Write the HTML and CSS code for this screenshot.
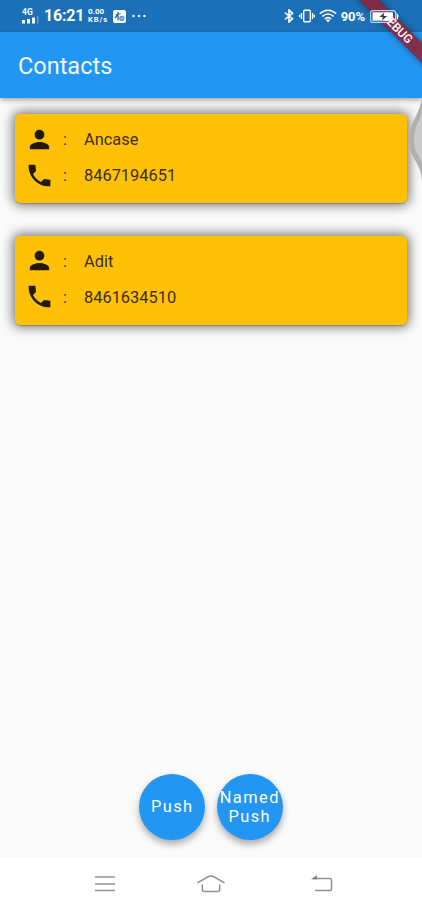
FILE: index.html
```html
<!DOCTYPE html>
<html lang="en">
<head>
<meta charset="utf-8">
<title>Contacts</title>
<link rel="stylesheet" href="styles.css">
</head>
<body>
<div class="screen">
  <header class="statusbar">
    <div class="network">
      <span class="gen">4G</span>
      <svg width="17" height="8" viewBox="0 0 17 8"><path fill="#fff" d="M0 4h3v3.500H0zM5 3h3v4.500H5zM10 1.500h3v6h-3z"/><path fill="#fff" opacity=".3" d="M15 0h1.500v7.500H15z"/></svg>
    </div>
    <span class="clock">16:21</span>
    <div class="speed"><span class="rate">0.00</span><span class="unit">KB/s</span></div>
    <svg class="app" width="13" height="13" viewBox="0 0 13 13"><rect width="13" height="13" rx="2" fill="#fff"/><path d="M5 2v8.500M2.500 5l5-1.500M2 8l3-3.500" stroke="#1b70b7" stroke-width="1.300" fill="none"/><circle cx="8.800" cy="8.500" r="2" fill="#8dbde5" stroke="#559bd5" stroke-width="1.300"/></svg>
    <svg class="dots" width="14" height="4" viewBox="0 0 14 4" fill="#fff"><circle cx="1.500" cy="2" r="1.200"/><circle cx="7" cy="2" r="1.200"/><circle cx="12.400" cy="2" r="1.200"/></svg>
    <div class="right">
      <svg class="bt" width="10" height="14" viewBox="0 0 10 14"><path d="M1 3.700l7.500 6L5 13V1l3.500 3.300L1 10.300" fill="none" stroke="#fff" stroke-width="1.600"/></svg>
      <svg class="vib" width="16" height="14" viewBox="0 0 16 14" fill="none" stroke="#fff" stroke-width="1.400"><rect x="4.700" y="1.200" width="6.600" height="11.600" rx="1"/><path d="M2.500 4v6M13.500 4v6M.7 5.700v2.600M15.300 5.700v2.600"/></svg>
      <svg class="wifi" width="18" height="14" viewBox="0 0 18 14" fill="none" stroke="#fff" stroke-width="1.500"><path d="M.8 4.800Q9-2.300 17.200 4.800M3.300 7.500Q9 2.500 14.700 7.500M5.700 10Q9 7.200 12.300 10"/><path d="M6.800 11Q9 9.400 11.200 11L9 13.500z" fill="#fff" stroke="none"/></svg>
      <span class="pct">90%</span>
      <svg width="29" height="13" viewBox="0 0 29 13"><rect x=".6" y=".6" width="25" height="11.800" rx="2.200" fill="none" stroke="#bcd8ef" stroke-width="1.100"/><path d="M2.500 2.300h20.500v8.400H2.500z" fill="#fff"/><path d="M26.700 2.500q3.400 4 0 8z" fill="#fff"/><path d="M14 2.700L9.500 7h3.300l-.8 3.600L17.200 6h-3.500z" fill="#2b3a46"/></svg>
    </div>
  </header>
  <div class="appbar"><h1>Contacts</h1></div>
  <main class="list">
    <section class="card">
      <div class="row"><svg class="icon" viewBox="0 0 24 24"><path d="M12 12c2.210 0 4-1.790 4-4s-1.790-4-4-4-4 1.790-4 4 1.790 4 4 4zm0 2c-2.670 0-8 1.340-8 4v2h16v-2c0-2.660-5.330-4-8-4z"/></svg><span class="colon">:</span><span>Ancase</span></div>
      <div class="row"><svg class="icon" viewBox="0 0 24 24"><path d="M21 15.460l-5.270-.61-2.520 2.520c-2.830-1.440-5.150-3.750-6.590-6.590l2.530-2.530L8.540 3H3.030C2.450 13.180 10.820 21.550 21 20.970v-5.510z"/></svg><span class="colon">:</span><span>8467194651</span></div>
    </section>
    <section class="card">
      <div class="row"><svg class="icon" viewBox="0 0 24 24"><path d="M12 12c2.210 0 4-1.790 4-4s-1.790-4-4-4-4 1.790-4 4 1.790 4 4 4zm0 2c-2.670 0-8 1.340-8 4v2h16v-2c0-2.660-5.330-4-8-4z"/></svg><span class="colon">:</span><span>Adit</span></div>
      <div class="row"><svg class="icon" viewBox="0 0 24 24"><path d="M21 15.460l-5.270-.61-2.520 2.520c-2.830-1.440-5.150-3.750-6.590-6.590l2.530-2.530L8.540 3H3.030C2.450 13.180 10.820 21.550 21 20.970v-5.510z"/></svg><span class="colon">:</span><span>8461634510</span></div>
    </section>
  </main>
  <div class="actions">
    <button class="fab">Push</button>
    <button class="fab"><span>Named</span><span>Push</span></button>
  </div>
  <nav class="navbar">
    <svg width="22" height="18" viewBox="0 0 22 18"><path d="M1 2h20M1 9h20M1 15.500h20" stroke="#949494" stroke-width="1.300"/></svg>
    <svg class="home" width="30" height="20" viewBox="0 0 30 20" fill="none" stroke="#909090" stroke-width="1.500"><path d="M1.500 8.800L12.500 2.500Q15 1.300 17.500 2.500L28.500 8.800M6.300 10.500V15.500q0 2 2 2h13.400q2 0 2-2v-5"/></svg>
    <svg width="22" height="18" viewBox="0 0 22 18"><path d="M2 3.500h17q1.500 0 1.500 1.500v9q0 1.500-1.500 1.500H4" fill="none" stroke="#909090" stroke-width="1.500"/><path d="M0 4.200L6 .3v3.900z" fill="#808080"/></svg>
  </nav>
  <svg class="edge" width="14" height="92" viewBox="0 0 14 92"><path d="M14 0C13 21 1 27 1 46S13 67 14 88z" fill="#b0b0b0"/><path d="M14 18C12 27 6 32 6 46S12 61 14 70z" fill="#cacaca"/></svg>
  <div class="corner"><div class="debug">DEBUG</div></div>
</div>
</body>
</html>
```
FILE: styles.css
```css
* { box-sizing: border-box; }
body { margin: 0; font-family: Roboto, "Liberation Sans", sans-serif; }
svg { display: block; flex: none; }
.screen { position: relative; width: 422px; height: 907px; overflow: hidden; background: #fafafa; display: flex; flex-direction: column; }
.statusbar { height: 32px; flex: none; background: #1b70b7; color: #fff; display: flex; align-items: center; padding: 0 23px 0 22px; }
.network { width: 22px; display: flex; flex-direction: column; }
.gen { font-size: 8.500px; line-height: 7px; font-weight: 700; }
.clock { width: 44px; font-size: 16px; font-weight: 700; line-height: 32px; letter-spacing: -.2px; }
.speed { width: 25px; display: flex; flex-direction: column; line-height: 8px; font-weight: 700; }
.rate { font-size: 8px; }
.unit { font-size: 7.500px; letter-spacing: 1px; }
.dots { margin-left: 6px; }
.right { margin-left: auto; display: flex; align-items: center; position: relative; z-index: 3; }
.vib { margin-left: 5px; }
.wifi { margin-left: 4px; }
.pct { margin: 0 5px 0 4px; font-size: 13px; font-weight: 700; letter-spacing: -.1px; }
.appbar { height: 66px; flex: none; background: #2196f3; display: flex; align-items: center; padding: 1px 18px 0; box-shadow: 0 2px 5px rgba(0,0,0,.35); position: relative; }
.appbar h1 { margin: 0; color: #fff; font-size: 23.500px; font-weight: 400; opacity: .95; }
.list { flex: 1; padding: 16px 15px 0; display: flex; flex-direction: column; gap: 32.500px; }
.card { height: 89px; flex: none; background: #ffc107; border-radius: 5px; padding: 10.500px 9.500px; display: flex; flex-direction: column; gap: 7.400px; box-shadow: 0 0 12px 2px rgba(0,0,0,.55), 0 1px 1px rgba(0,0,0,.2); }
.row { height: 29px; display: flex; align-items: center; font-size: 16.400px; color: rgba(0,0,0,.8); }
.row span { padding-top: 1px; }
.icon { width: 29px; height: 29px; fill: rgba(0,0,0,.87); margin-right: 9.500px; }
.colon { width: 21px; }
.actions { flex: none; height: 84.500px; display: flex; justify-content: center; gap: 11.500px; }
.fab { width: 66px; height: 66px; border: 0; border-radius: 50%; padding: 2px 0 0; background: #2196f3; color: #fff; font: 400 16.400px/18.500px Roboto, sans-serif; letter-spacing: 1.450px; display: flex; flex-direction: column; align-items: center; justify-content: center; box-shadow: 0 4px 7px rgba(0,0,0,.33); }
.navbar { height: 49px; flex: none; background: #fff; display: flex; align-items: center; justify-content: space-between; padding: 2px 89px 0 94px; }
.home { position: relative; left: -3px; }
.edge { position: absolute; right: 0; top: 94px; }
.corner { position: absolute; z-index: 2; top: 0; right: 0; width: 68px; height: 68px; overflow: hidden; }
.debug { position: absolute; left: -7px; top: 21px; width: 100px; height: 14px; transform: rotate(45deg); background: rgba(139,35,58,.9); box-shadow: 0 0 6px rgba(0,0,0,.45); color: #fff; font-size: 12px; line-height: 14px; font-weight: 500; text-align: center; }
```
